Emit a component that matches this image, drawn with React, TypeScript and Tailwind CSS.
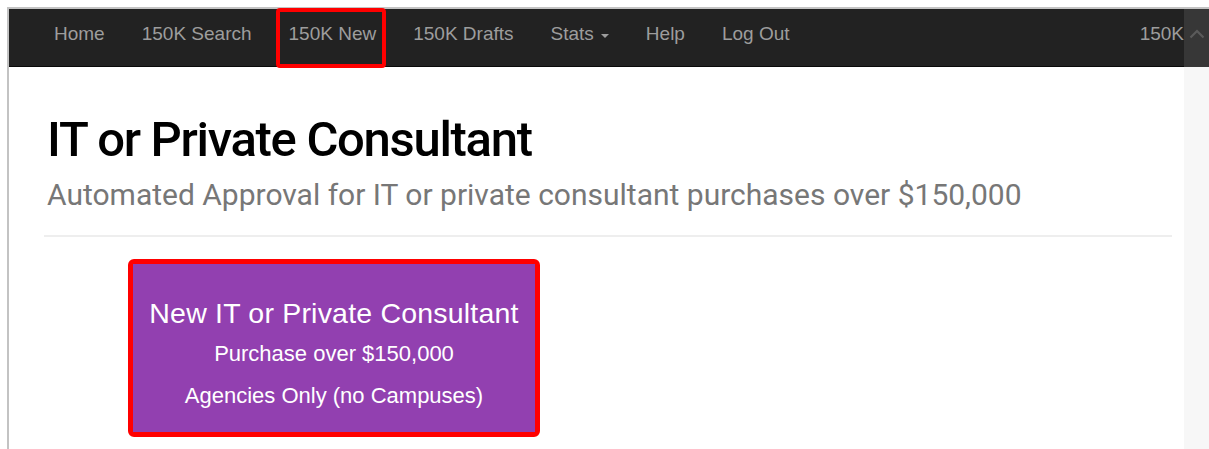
import React from "react";

const navItems = ["Home", "150K Search", "150K New", "150K Drafts", "Stats", "Help", "Log Out"];

function NavLink({ label }: { label: string }) {
  const active = label === "150K New";
  return (
    <div className="relative flex h-full items-center px-[18.5px] pb-[6px] text-[19px] text-[#9d9d9d]">
      <span>{label}</span>
      {label === "Stats" && (
        <span className="ml-[7px] mt-[2px] inline-block h-0 w-0 border-x-[4px] border-t-[4px] border-x-transparent border-t-[#9d9d9d]" />
      )}
      {active && (
        <span className="pointer-events-none absolute -top-[1px] -bottom-[2px] left-[6px] right-[9px] rounded-[4px] border-[4px] border-[#ff0000]" />
      )}
    </div>
  );
}

export default function App() {
  return (
    <div className="h-[449px] w-[1209px] overflow-hidden bg-white pl-[7px] pt-[7px] font-['Liberation_Sans',Arial,sans-serif]">
      <div className="flex h-full border-l-2 border-t-2 border-[#c3c3c3]">
        <div className="flex min-w-0 flex-1 flex-col">
          <nav className="flex h-[58px] shrink-0 items-stretch justify-between border-b border-[#0a0a0a] bg-[#222222] pl-[26.5px]">
            <div className="flex items-stretch">
              {navItems.map((n) => (
                <NavLink key={n} label={n} />
              ))}
            </div>
            <div className="flex items-center pb-[6px] text-[19px] text-[#9d9d9d]">150K</div>
          </nav>
          <div className="pl-[35px] pr-[12px]">
            <h1 className="pl-[3px] pt-[45px] font-['Roboto',sans-serif] text-[49px] font-medium leading-[56px] tracking-[-1.3px] text-black">
              IT or Private Consultant
            </h1>
            <p className="mt-[9px] pl-[3px] font-['Roboto',sans-serif] text-[30px] leading-[36px] text-[#777777]">
              Automated Approval for IT or private consultant purchases over $150,000
            </p>
            <hr className="mt-[22px] border-t-2 border-[#eeeeee]" />
            <div className="ml-[84px] mt-[22px] w-[412px] rounded-[6px] border-[5px] border-[#ff0000]">
              <div className="flex h-[168px] flex-col items-center bg-[#9240b0] pt-[33px] text-white">
                <div className="text-[28.5px] leading-[32px] tracking-[0.2px]">New IT or Private Consultant</div>
                <div className="mt-[12px] text-[22px] leading-[26px]">Purchase over $150,000</div>
                <div className="mt-[16px] text-[22px] leading-[26px]">Agencies Only (no Campuses)</div>
              </div>
            </div>
          </div>
        </div>
        <div className="flex w-[25px] shrink-0 flex-col">
          <div className="flex h-[58px] items-start justify-center bg-[#373737] pt-[20px]">
            <svg width="16" height="10" viewBox="0 0 16 10" fill="none">
              <path d="M1.5 8.5 L8 2 L14.5 8.5" stroke="#5a5a5a" strokeWidth="2.2" />
            </svg>
          </div>
          <div className="flex-1 bg-[#f7f7f7]" />
        </div>
      </div>
    </div>
  );
}
